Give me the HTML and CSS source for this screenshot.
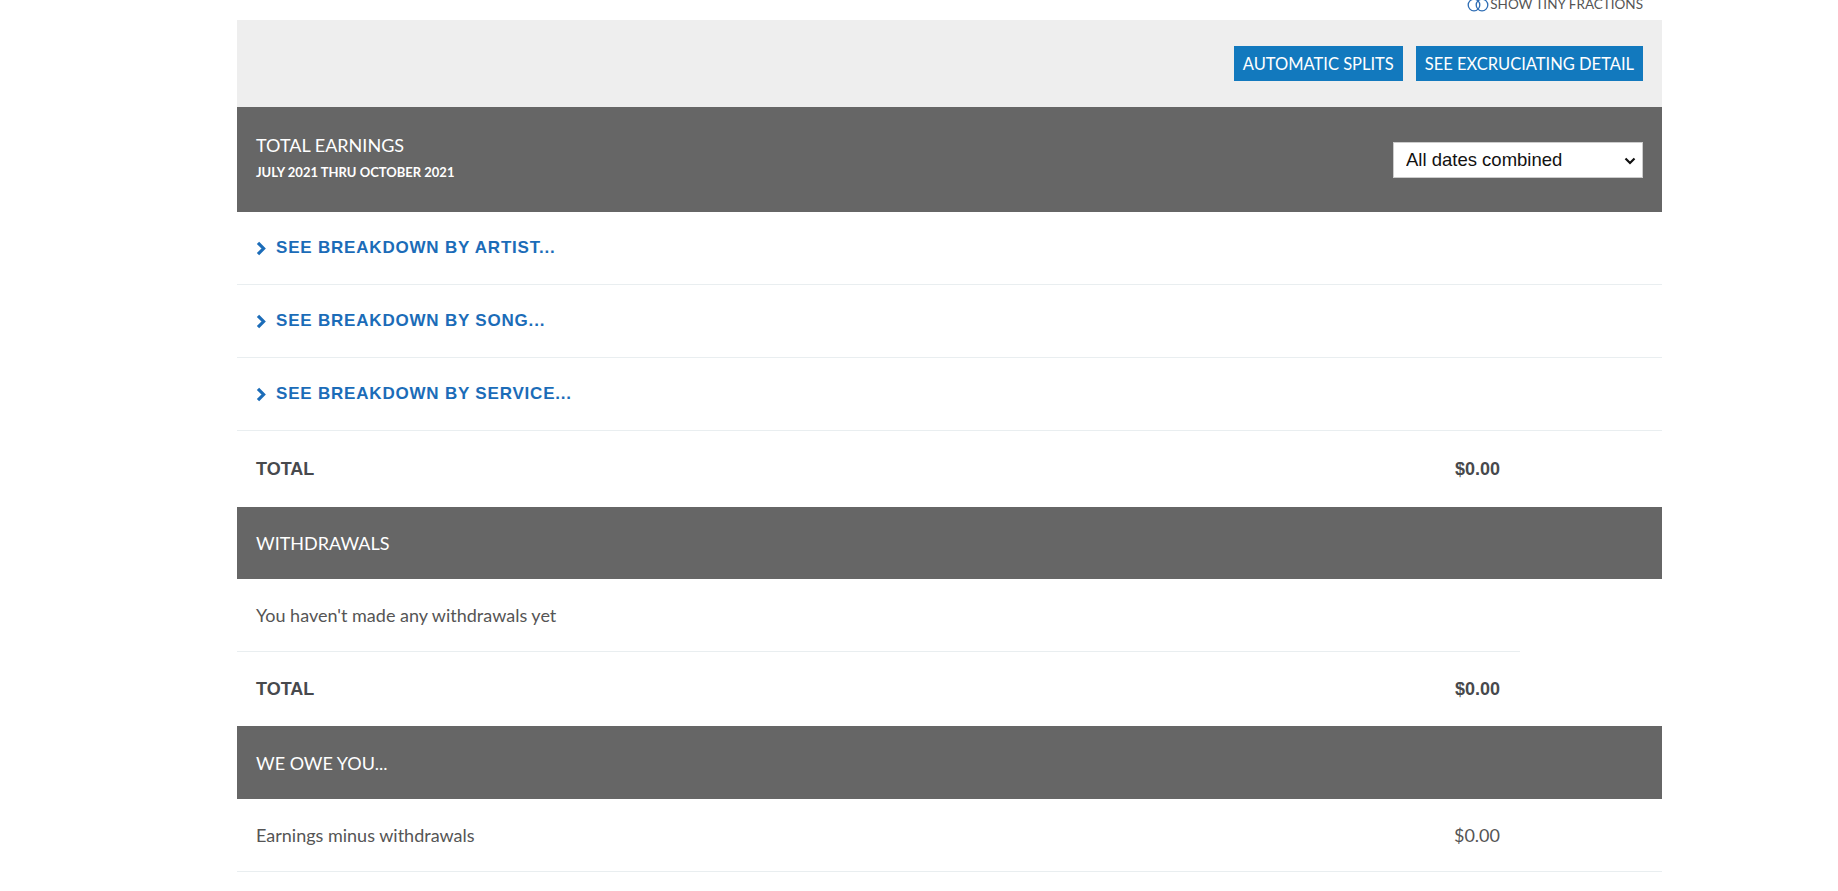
FILE: index.html
```html
<!DOCTYPE html>
<html lang="en">

<head>
    <meta charset="UTF-8">
    <meta name="viewport" content="width=device-width, initial-scale=1.0">
    <title>Earnings</title>
    <link rel="stylesheet" href="styles.css">
</head>

<body>
    <section class="earnings">
        <div class="fractions">
            <svg class="fractions-toggle" width="22" height="14" viewBox="0 0 22 14">
                <circle cx="7" cy="6" r="5.8" fill="none" stroke="#2e6db4" stroke-width="1.3" />
                <circle cx="15" cy="6" r="5.8" fill="none" stroke="#2e6db4" stroke-width="1.3" />
            </svg>
            <span>Show tiny fractions</span>
        </div>

        <div class="toolbar">
            <button class="btn">Automatic splits</button>
            <button class="btn">See excruciating detail</button>
        </div>

        <!-- earnings -->
        <div class="panel-head panel-head-tall">
            <div class="panel-heading">
                <div class="panel-title">Total earnings</div>
                <div class="panel-sub">July 2021 thru October 2021</div>
            </div>
            <div class="picker">
                <select>
                    <option>All dates combined</option>
                    <option>July 2021</option>
                    <option>August 2021</option>
                    <option>September 2021</option>
                    <option>October 2021</option>
                </select>
                <svg class="picker-arrow" width="12" height="8" viewBox="0 0 12 8">
                    <path d="M1.5 1.5 L6 6 L10.5 1.5" fill="none" stroke="#111" stroke-width="2.2" />
                </svg>
            </div>
        </div>
        <a class="row breakdown" href="#">
            <svg class="chev" width="10" height="15" viewBox="0 0 10 15">
                <path d="M2 1.8 L7.6 7.5 L2 13.2" fill="none" stroke="currentColor" stroke-width="3.2" />
            </svg>
            See breakdown by artist...
        </a>
        <a class="row breakdown" href="#">
            <svg class="chev" width="10" height="15" viewBox="0 0 10 15">
                <path d="M2 1.8 L7.6 7.5 L2 13.2" fill="none" stroke="currentColor" stroke-width="3.2" />
            </svg>
            See breakdown by song...
        </a>
        <a class="row breakdown" href="#">
            <svg class="chev" width="10" height="15" viewBox="0 0 10 15">
                <path d="M2 1.8 L7.6 7.5 L2 13.2" fill="none" stroke="currentColor" stroke-width="3.2" />
            </svg>
            See breakdown by service...
        </a>
        <div class="row total total-tall">
            <span>Total</span>
            <span>$0.00</span>
        </div>

        <!-- withdrawals -->
        <div class="panel-head">
            <div class="panel-title">Withdrawals</div>
        </div>
        <div class="row row-line row-short">
            <span>You haven't made any withdrawals yet</span>
        </div>
        <div class="row total">
            <span>Total</span>
            <span>$0.00</span>
        </div>

        <!-- balance -->
        <div class="panel-head panel-head-owe">
            <div class="panel-title">We owe you...</div>
        </div>
        <div class="row row-line">
            <span>Earnings minus withdrawals</span>
            <span>$0.00</span>
        </div>
    </section>
</body>

</html>
```

FILE: styles.css
```css
body {
    margin: 0;
    background-color: #ffffff;
    font-family: Lato, "Open Sans", sans-serif;
    color: #555555;
}

.earnings {
    width: 1425px;
    margin-left: 237px;
}

.fractions {
    display: flex;
    justify-content: flex-end;
    align-items: flex-start;
    height: 20px;
    padding-right: 19px;
    font-size: 13.5px;
    line-height: 13px;
    text-transform: uppercase;
    color: #555555;
}

.fractions span {
    margin-top: -2px;
}

.fractions-toggle {
    margin-top: -1px;
    margin-right: 1px;
}

.toolbar {
    display: flex;
    justify-content: flex-end;
    align-items: center;
    gap: 13px;
    height: 87px;
    padding: 0 19px;
    background-color: #eeeeee;
}

.btn {
    height: 35px;
    padding: 0 9px;
    border: none;
    background-color: #1279be;
    color: #ffffff;
    font-family: Lato, sans-serif;
    font-size: 16.5px;
    text-transform: uppercase;
    cursor: pointer;
}

.panel-head {
    display: flex;
    justify-content: space-between;
    align-items: center;
    height: 72px;
    padding: 0 19px;
    background-color: #666666;
    color: #ffffff;
}

.panel-head-tall {
    height: 105px;
}

.panel-head-owe {
    height: 73px;
}

.panel-heading {
    padding-bottom: 5px;
}

.panel-title {
    font-size: 18px;
    text-transform: uppercase;
}

.panel-sub {
    margin-top: 8px;
    font-size: 13px;
    font-weight: bold;
    text-transform: uppercase;
}

.picker {
    position: relative;
}

.picker select {
    appearance: none;
    width: 250px;
    height: 36px;
    padding: 0 12px;
    border: 1px solid #cccccc;
    border-radius: 0;
    background-color: #ffffff;
    font-family: "Liberation Sans", Arial, sans-serif;
    font-size: 18.5px;
    color: #111111;
}

.picker-arrow {
    position: absolute;
    right: 7px;
    top: 15px;
    pointer-events: none;
}

.row {
    display: flex;
    justify-content: space-between;
    align-items: center;
    box-sizing: border-box;
    height: 73px;
    padding: 0 162px 0 19px;
    font-size: 18px;
}

.row-line {
    border-bottom: 1px solid #e9eef0;
}

.row-short {
    margin-right: 142px;
    padding-right: 20px;
}

.breakdown {
    justify-content: flex-start;
    gap: 10px;
    border-bottom: 1px solid #e9eef0;
    color: #1b6cb8;
    font-family: "Liberation Sans", Arial, sans-serif;
    font-size: 17px;
    font-weight: bold;
    letter-spacing: 0.8px;
    text-transform: uppercase;
    text-decoration: none;
}

.total {
    height: 74px;
    font-family: "Liberation Sans", Arial, sans-serif;
    font-weight: bold;
    color: #47494d;
    text-transform: uppercase;
}

.total-tall {
    height: 76px;
}
```
